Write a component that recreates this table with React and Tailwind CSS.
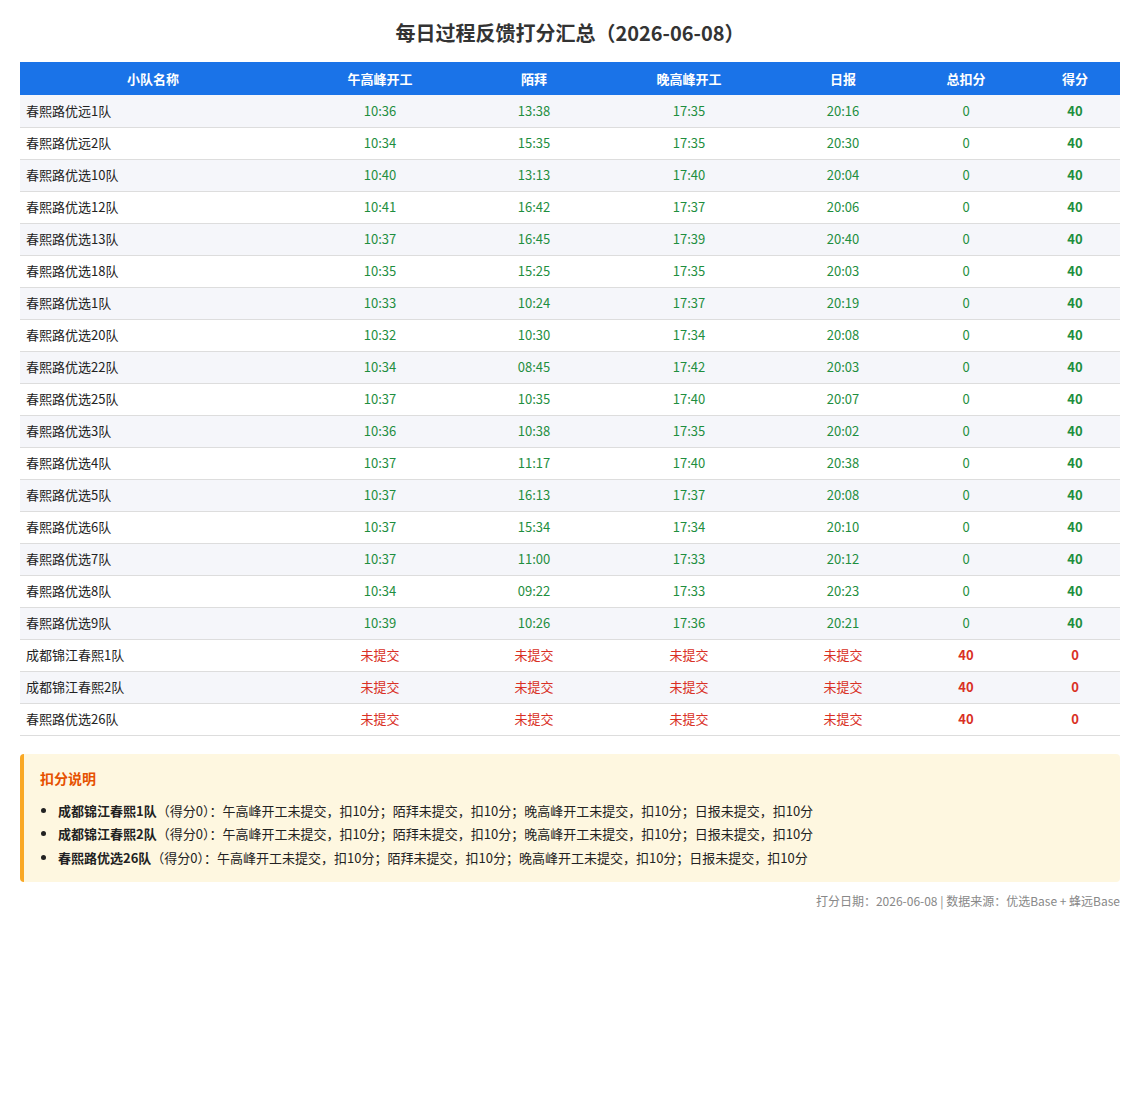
import React from 'react'

const rows = [
  ['春熙路优远1队', '10:36', '13:38', '17:35', '20:16'],
  ['春熙路优远2队', '10:34', '15:35', '17:35', '20:30'],
  ['春熙路优选10队', '10:40', '13:13', '17:40', '20:04'],
  ['春熙路优选12队', '10:41', '16:42', '17:37', '20:06'],
  ['春熙路优选13队', '10:37', '16:45', '17:39', '20:40'],
  ['春熙路优选18队', '10:35', '15:25', '17:35', '20:03'],
  ['春熙路优选1队', '10:33', '10:24', '17:37', '20:19'],
  ['春熙路优选20队', '10:32', '10:30', '17:34', '20:08'],
  ['春熙路优选22队', '10:34', '08:45', '17:42', '20:03'],
  ['春熙路优选25队', '10:37', '10:35', '17:40', '20:07'],
  ['春熙路优选3队', '10:36', '10:38', '17:35', '20:02'],
  ['春熙路优选4队', '10:37', '11:17', '17:40', '20:38'],
  ['春熙路优选5队', '10:37', '16:13', '17:37', '20:08'],
  ['春熙路优选6队', '10:37', '15:34', '17:34', '20:10'],
  ['春熙路优选7队', '10:37', '11:00', '17:33', '20:12'],
  ['春熙路优选8队', '10:34', '09:22', '17:33', '20:23'],
  ['春熙路优选9队', '10:39', '10:26', '17:36', '20:21'],
  ['成都锦江春熙1队', null, null, null, null],
  ['成都锦江春熙2队', null, null, null, null],
  ['春熙路优选26队', null, null, null, null],
]

const headers = [
  ['小队名称', 'w-[266px]'],
  ['午高峰开工', 'w-[188px]'],
  ['陌拜', 'w-[120px]'],
  ['晚高峰开工', 'w-[190px]'],
  ['日报', 'w-[118px]'],
  ['总扣分', 'w-[128px]'],
  ['得分', 'w-[90px]'],
]

const missed = ['成都锦江春熙1队', '成都锦江春熙2队', '春熙路优选26队']

const TimeCell = ({ value }) =>
  value ? (
    <td className="text-center text-[#1e8e3e]">{value}</td>
  ) : (
    <td className="text-center text-[#d93025]">未提交</td>
  )

export default function App() {
  return (
    <div className="px-5 pt-[19px] pb-10 text-[13px] text-[#222] bg-white min-h-[1100px]" style={{ fontFamily: '"Noto Sans CJK SC", "Noto Sans", sans-serif' }}>
      <h1 className="text-center text-[20px] font-bold text-[#333] leading-[28px] mb-[15px]">
        每日过程反馈打分汇总（2026-06-08）
      </h1>

      <table className="w-[1100px] border-collapse table-fixed">
        <thead>
          <tr className="bg-[#1a73e8] text-white h-[33px]">
            {headers.map(([h, w]) => (
              <th key={h} className={`${w} font-bold text-center`}>{h}</th>
            ))}
          </tr>
        </thead>
        <tbody>
          {rows.map((r, i) => {
            const done = r[1] !== null
            return (
              <tr key={r[0]} className={`h-[32px] border-b border-[#dddddd] ${i % 2 === 0 ? 'bg-[#f5f6fa]' : 'bg-white'}`}>
                <td className="pl-[6px]">{r[0]}</td>
                <TimeCell value={r[1]} />
                <TimeCell value={r[2]} />
                <TimeCell value={r[3]} />
                <TimeCell value={r[4]} />
                {done ? (
                  <>
                    <td className="text-center text-[#1e8e3e]">0</td>
                    <td className="text-center font-bold text-[#1e8e3e]">40</td>
                  </>
                ) : (
                  <>
                    <td className="text-center font-bold text-[#d93025]">40</td>
                    <td className="text-center font-bold text-[#d93025]">0</td>
                  </>
                )}
              </tr>
            )
          })}
        </tbody>
      </table>

      <div className="mt-[18px] bg-[#fef7e0] border-l-4 border-[#f9a825] rounded-[4px] pl-4 pr-5 pt-[13px] pb-[13px]">
        <h3 className="text-[14px] font-bold text-[#e65100] leading-[22px]">扣分说明</h3>
        <ul className="list-disc pl-[18px] mt-[10px] leading-[23.5px]">
          {missed.map((name) => (
            <li key={name}>
              <b>{name}</b>（得分0）：午高峰开工未提交，扣10分；陌拜未提交，扣10分；晚高峰开工未提交，扣10分；日报未提交，扣10分
            </li>
          ))}
        </ul>
      </div>

      <p className="mt-[10px] text-right text-[12px] text-[#888]">
        打分日期：2026-06-08 | 数据来源：优选Base + 蜂远Base
      </p>
    </div>
  )
}
